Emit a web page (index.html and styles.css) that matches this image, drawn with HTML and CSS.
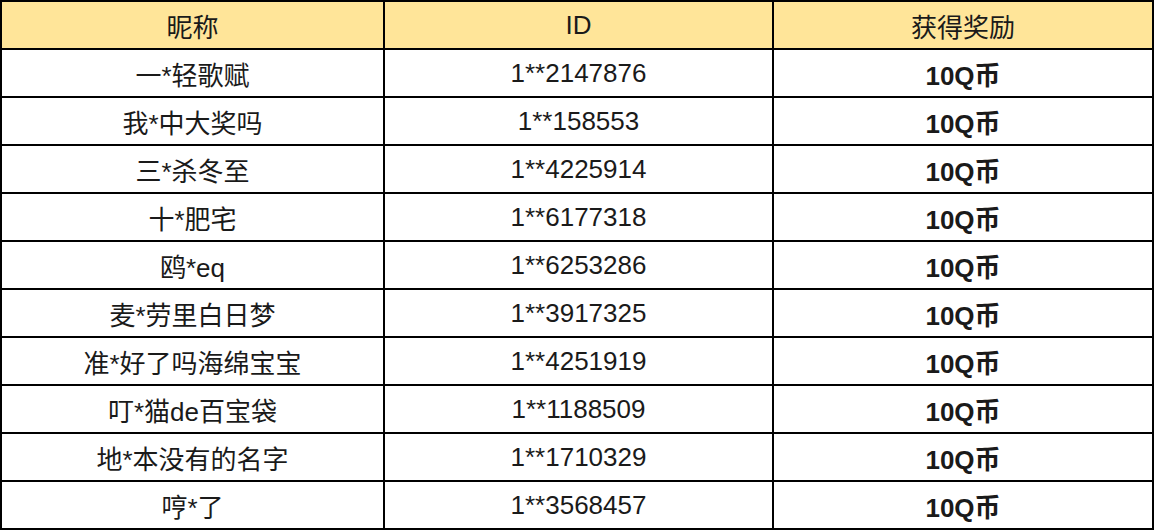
FILE: index.html
```html
<!DOCTYPE html>
<html lang="zh-CN">
<head>
<meta charset="utf-8">
<title>获奖名单</title>
<link rel="stylesheet" href="styles.css">
</head>
<body>
<div class="table">
  <div class="cell head">昵称</div><div class="cell head">ID</div><div class="cell head">获得奖励</div>
  <div class="cell">一*轻歌赋</div><div class="cell">1**2147876</div><div class="cell prize">10Q币</div>
  <div class="cell">我*中大奖吗</div><div class="cell">1**158553</div><div class="cell prize">10Q币</div>
  <div class="cell">三*杀冬至</div><div class="cell">1**4225914</div><div class="cell prize">10Q币</div>
  <div class="cell">十*肥宅</div><div class="cell">1**6177318</div><div class="cell prize">10Q币</div>
  <div class="cell">鸥*eq</div><div class="cell">1**6253286</div><div class="cell prize">10Q币</div>
  <div class="cell">麦*劳里白日梦</div><div class="cell">1**3917325</div><div class="cell prize">10Q币</div>
  <div class="cell">准*好了吗海绵宝宝</div><div class="cell">1**4251919</div><div class="cell prize">10Q币</div>
  <div class="cell">叮*猫de百宝袋</div><div class="cell">1**1188509</div><div class="cell prize">10Q币</div>
  <div class="cell">地*本没有的名字</div><div class="cell">1**1710329</div><div class="cell prize">10Q币</div>
  <div class="cell">哼*了</div><div class="cell">1**3568457</div><div class="cell prize">10Q币</div>
</div>
</body>
</html>
```
FILE: styles.css
```css
html, body {
  margin: 0;
  padding: 0;
  background: #ffffff;
}
.table {
  display: grid;
  grid-template-columns: 383px 389px 380px;
  width: 1154px;
  box-sizing: border-box;
  border-left: 2px solid #000;
  border-top: 2px solid #000;
  font-family: "Liberation Sans", "Noto Sans CJK SC", sans-serif;
  font-size: 26px;
  color: #1a1a1a;
}
.cell {
  box-sizing: border-box;
  height: 48px;
  border-right: 2px solid #000;
  border-bottom: 2px solid #000;
  display: flex;
  align-items: center;
  justify-content: center;
  white-space: nowrap;
}
.head {
  background: #ffe599;
}
.prize {
  font-weight: bold;
}
```
